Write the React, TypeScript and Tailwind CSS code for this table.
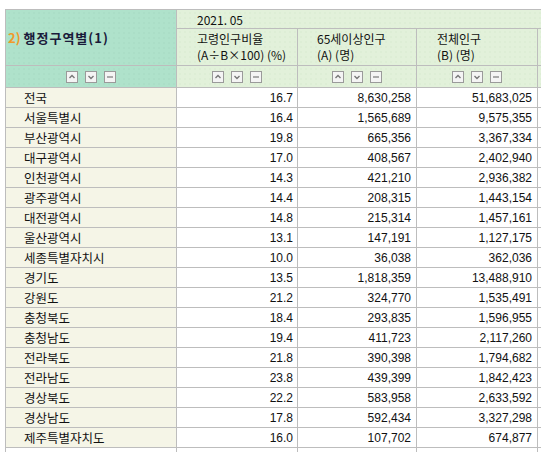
import React from "react";

const rows: [string, string, string, string][] = [
  ["전국", "16.7", "8,630,258", "51,683,025"],
  ["서울특별시", "16.4", "1,565,689", "9,575,355"],
  ["부산광역시", "19.8", "665,356", "3,367,334"],
  ["대구광역시", "17.0", "408,567", "2,402,940"],
  ["인천광역시", "14.3", "421,210", "2,936,382"],
  ["광주광역시", "14.4", "208,315", "1,443,154"],
  ["대전광역시", "14.8", "215,314", "1,457,161"],
  ["울산광역시", "13.1", "147,191", "1,127,175"],
  ["세종특별자치시", "10.0", "36,038", "362,036"],
  ["경기도", "13.5", "1,818,359", "13,488,910"],
  ["강원도", "21.2", "324,770", "1,535,491"],
  ["충청북도", "18.4", "293,835", "1,596,955"],
  ["충청남도", "19.4", "411,723", "2,117,260"],
  ["전라북도", "21.8", "390,398", "1,794,682"],
  ["전라남도", "23.8", "439,399", "1,842,423"],
  ["경상북도", "22.2", "583,958", "2,633,592"],
  ["경상남도", "17.8", "592,434", "3,327,298"],
  ["제주특별자치도", "16.0", "107,702", "674,877"],
];

const teal =
  "bg-[#afe2cb] bg-[radial-gradient(circle,#9dd3bb_0.6px,transparent_0.8px)] bg-[length:5px_5px]";
const green =
  "bg-[#e2f1da] bg-[radial-gradient(circle,#cfe3c6_0.6px,transparent_0.8px)] bg-[length:5px_5px]";

function Btn({ kind }: { kind: "up" | "down" | "min" }) {
  return (
    <span className="inline-flex w-[12px] h-[12px] border border-[#9a9a9a] bg-[#f4f4f4] items-center justify-center">
      <svg width="10" height="10" viewBox="0 0 10 10">
        {kind === "up" && (
          <path d="M2.5 6 L5 3.5 L7.5 6" stroke="#777" strokeWidth="1.4" fill="none" />
        )}
        {kind === "down" && (
          <path d="M2.5 4 L5 6.5 L7.5 4" stroke="#777" strokeWidth="1.4" fill="none" />
        )}
        {kind === "min" && <path d="M2 5 H8" stroke="#777" strokeWidth="1.2" fill="none" />}
      </svg>
    </span>
  );
}

function Btns() {
  return (
    <div className="flex justify-center gap-[7px]">
      <Btn kind="up" />
      <Btn kind="down" />
      <Btn kind="min" />
    </div>
  );
}

const num = { fontFamily: '"Liberation Sans", sans-serif' };

export default function App() {
  const kr = { fontFamily: '"Noto Sans CJK KR", "Liberation Sans", sans-serif' };
  return (
    <div className="w-[541px] h-[452px] overflow-hidden bg-white pt-[9px] pl-[5px]">
      <table
        className="w-[632px] border-collapse table-fixed text-[12px] text-[#111] leading-[14px]"
        style={kr}
      >
        <colgroup>
          <col className="w-[171px]" />
          <col className="w-[121px]" />
          <col className="w-[119px]" />
          <col className="w-[121px]" />
          <col className="w-[100px]" />
        </colgroup>
        <tbody>
          <tr className="h-[19px]">
            <td rowSpan={2} className={`border border-[#bdbdbd] ${teal} pl-[2px] align-middle text-[13px]`}>
              <span className="text-[#f09a2a] font-bold">2)</span>{" "}
              <span className="font-bold text-[#1a1a3a] tracking-[1px]">행정구역별(1)</span>
            </td>
            <td colSpan={4} className={`border border-[#bdbdbd] ${green} pl-[20px] pt-[1px]`}>
              2021. 05
            </td>
          </tr>
          <tr className="h-[37px]">
            <td className={`border border-[#bdbdbd] ${green} pl-[20px] align-middle leading-[16px]`}>
              <div>고령인구비율</div>
              <div>(A÷B×100) (%)</div>
            </td>
            <td className={`border border-[#bdbdbd] ${green} pl-[19px] align-middle leading-[16px]`}>
              <div>65세이상인구</div>
              <div>(A) (명)</div>
            </td>
            <td className={`border border-[#bdbdbd] ${green} pl-[20px] align-middle leading-[16px]`}>
              <div>전체인구</div>
              <div>(B) (명)</div>
            </td>
            <td className={`border border-[#bdbdbd] ${green}`}></td>
          </tr>
          <tr className="h-[22px]">
            <td className={`border border-[#bdbdbd] ${teal}`}>
              <Btns />
            </td>
            <td className={`border border-[#bdbdbd] ${green}`}>
              <Btns />
            </td>
            <td className={`border border-[#bdbdbd] ${green}`}>
              <Btns />
            </td>
            <td className={`border border-[#bdbdbd] ${green}`}>
              <Btns />
            </td>
            <td className={`border border-[#bdbdbd] ${green}`}></td>
          </tr>
          {rows.map((r) => (
            <tr key={r[0]} className="h-[20px]">
              <td className="border border-[#bdbdbd] bg-[#f5f5e7] pl-[18px] text-[12.5px]">{r[0]}</td>
              <td className="border border-[#bdbdbd] bg-white text-right pr-[4px]" style={num}>
                {r[1]}
              </td>
              <td className="border border-[#bdbdbd] bg-white text-right pr-[5px]" style={num}>
                {r[2]}
              </td>
              <td className="border border-[#bdbdbd] bg-white text-right pr-[5px]" style={num}>
                {r[3]}
              </td>
              <td className="border border-[#bdbdbd] bg-white"></td>
            </tr>
          ))}
          <tr className="h-[20px]">
            <td className="border border-[#bdbdbd] bg-white"></td>
            <td className="border border-[#bdbdbd] bg-white"></td>
            <td className="border border-[#bdbdbd] bg-white"></td>
            <td className="border border-[#bdbdbd] bg-white"></td>
            <td className="border border-[#bdbdbd] bg-white"></td>
          </tr>
        </tbody>
      </table>
    </div>
  );
}
